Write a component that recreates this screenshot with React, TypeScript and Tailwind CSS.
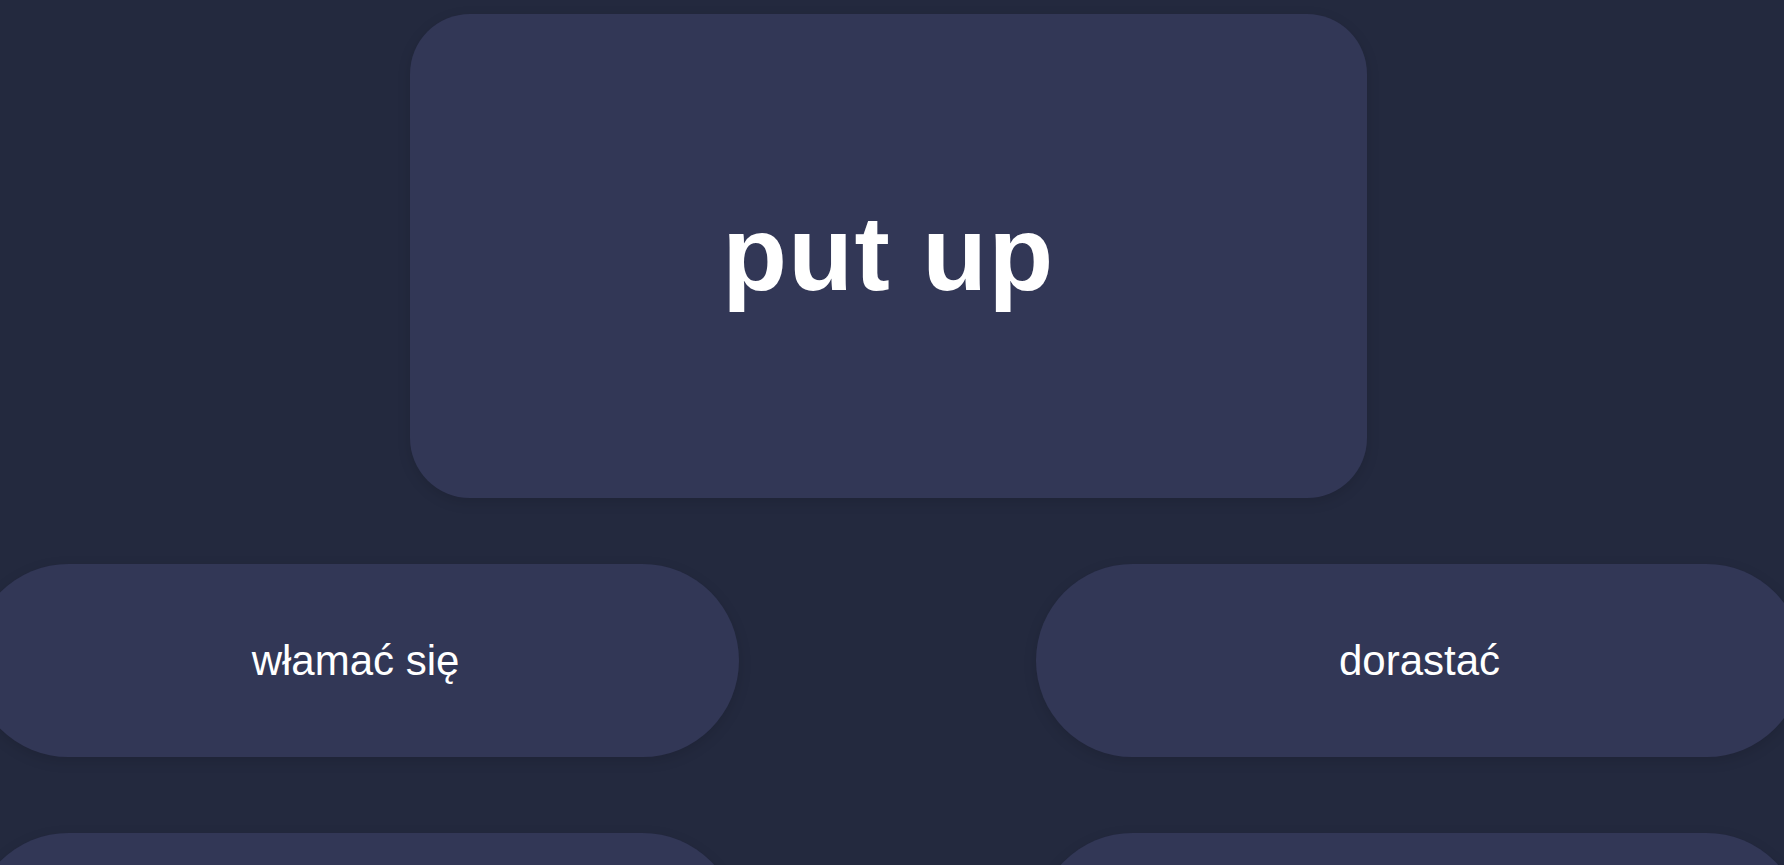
import React from "react";

const pills = ["włamać się", "dorastać", "", ""];

export default function App() {
  return (
    <div className="h-[865px] w-full overflow-hidden bg-[#23293e] font-['Liberation_Sans',Arial,sans-serif]">
      <div className="flex flex-col pt-[14px]">
        <div className="ml-[410px] flex h-[484px] w-[957px] items-center justify-center rounded-[60px] bg-[#323756] shadow-[0_4px_14px_rgba(0,0,0,0.12)]">
          <span className="mb-[6px] text-[106px] font-bold tracking-[1.5px] text-white">put up</span>
        </div>
        <div className="ml-[-28px] mt-[66px] grid grid-cols-[767px_767px] gap-x-[297px] gap-y-[76px]">
          {pills.map((p, i) => (
            <div
              key={i}
              className="flex h-[193px] items-center justify-center rounded-full bg-[#323756] text-[42px] text-white shadow-[0_4px_14px_rgba(0,0,0,0.12)]"
            >
              {p}
            </div>
          ))}
        </div>
      </div>
    </div>
  );
}
